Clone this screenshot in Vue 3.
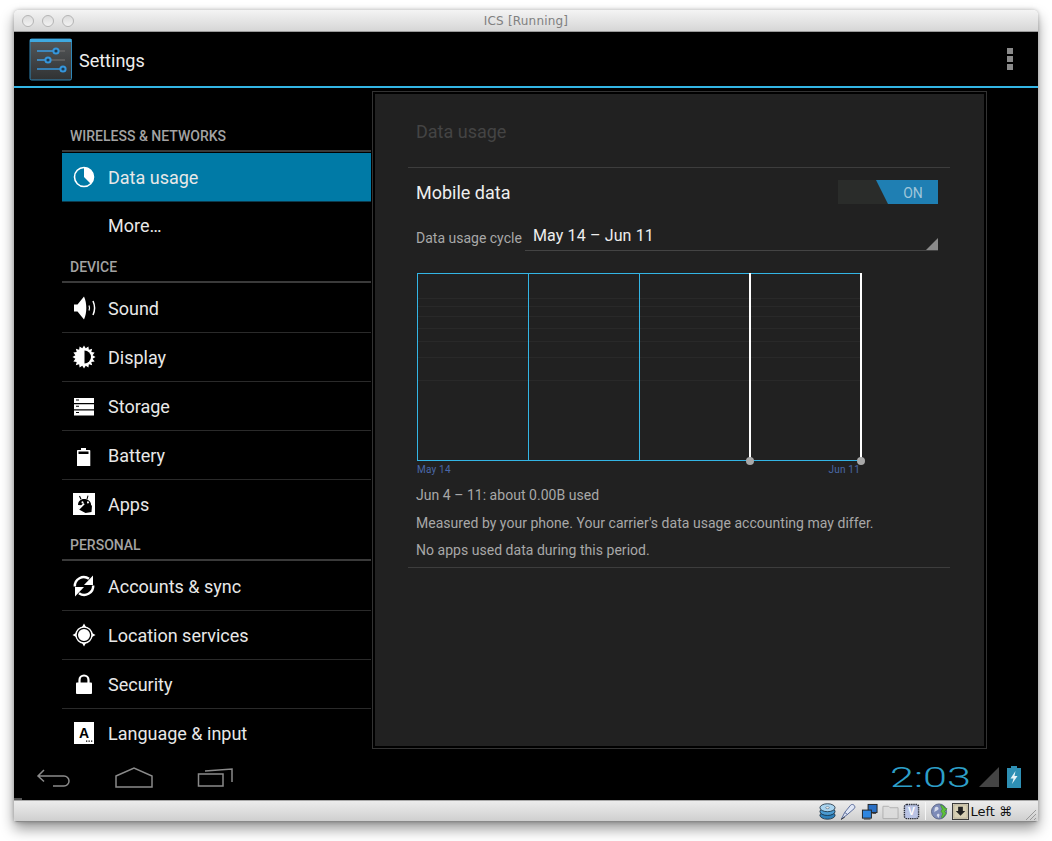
<template>
  <div class="page">
    <div class="window">
      <div class="titlebar">
        <div class="lights">
          <span class="light"></span>
          <span class="light"></span>
          <span class="light"></span>
        </div>
        <span class="window-title">ICS [Running]</span>
      </div>

      <div class="screen">
        <div class="actionbar">
          <svg class="app-icon" width="44" height="43" viewBox="0 0 44 43">
            <defs>
              <linearGradient id="appbg" x1="0" y1="0" x2="0" y2="1">
                <stop offset="0" stop-color="#55585a" />
                <stop offset="1" stop-color="#303233" />
              </linearGradient>
            </defs>
            <rect x="1" y="1" width="41.5" height="41" rx="1.5" fill="url(#appbg)" stroke="#2f87b8" />
            <rect x="1" y="1" width="41.5" height="3" fill="#3fa9e0" />
            <g stroke="#3596dc" stroke-width="1.5" fill="none">
              <path d="M8 13H36" stroke="#666" />
              <path d="M8 13H26" />
              <circle cx="27" cy="13" r="2.6" fill="#1c3a52" stroke-width="2" />
              <path d="M8 22H36" stroke="#666" />
              <path d="M8 22H19" />
              <circle cx="19" cy="22" r="2.6" fill="#1c3a52" stroke-width="2" />
              <path d="M8 31H36" />
              <circle cx="34" cy="31" r="2.6" fill="#1c3a52" stroke-width="2" />
            </g>
          </svg>
          <span class="app-title">Settings</span>
          <div class="overflow">
            <span></span>
            <span></span>
            <span></span>
          </div>
        </div>

        <div class="content">
          <div class="sidebar">
            <template v-for="section in sections" :key="section.title">
              <div class="section-title">{{ section.title }}</div>
              <div
                v-for="(item, index) in section.items"
                :key="item.label"
                class="row"
                :class="{ selected: item.selected, plain: item.plain, first: index == 0, 'no-icon': !item.icon }"
              >
                <svg class="row-icon" width="24" height="24" viewBox="0 0 24 24">
                  <template v-if="item.icon">
                    <path
                      v-for="(p, i) in icons[item.icon]"
                      :key="i"
                      :d="p.d"
                      :fill="p.stroke ? 'none' : (p.fill || '#fff')"
                      fill-rule="evenodd"
                      :stroke="p.stroke ? '#fff' : 'none'"
                      :stroke-width="p.stroke"
                    />
                    <text v-if="item.icon == 'language'" x="12" y="17" class="key-a">A</text>
                  </template>
                </svg>
                <span class="row-label">{{ item.label }}</span>
              </div>
            </template>
          </div>

          <div class="panel">
            <div class="panel-inner">
              <div class="panel-title">Data usage</div>

              <div class="mobile-row">
                <span class="mobile-label">Mobile data</span>
                <div class="toggle">
                  <span class="toggle-on">ON</span>
                </div>
              </div>

              <div class="cycle-row">
                <span class="cycle-label">Data usage cycle</span>
                <div class="spinner">
                  <span>May 14 – Jun 11</span>
                  <i class="spinner-corner"></i>
                </div>
              </div>

              <svg class="chart" width="460" height="206" viewBox="0 0 460 206">
                <path
                  v-for="y in gridLines"
                  :key="y"
                  :d="`M2 ${y}.5H445`"
                  stroke="#292929"
                  fill="none"
                />
                <rect x="1.5" y="1.5" width="443" height="187" fill="none" stroke="#33b5e5" />
                <path d="M112.5 2V188M223.5 2V188" stroke="#33b5e5" fill="none" />
                <path d="M334 1V189M445 1V189" stroke="#fff" stroke-width="2" fill="none" />
                <circle cx="334" cy="189" r="4" fill="#a8a8a8" />
                <circle cx="445" cy="189" r="4" fill="#a8a8a8" />
                <text x="1" y="201" class="chart-label">May 14</text>
                <text x="444" y="201" text-anchor="end" class="chart-label">Jun 11</text>
              </svg>

              <div class="notes">
                <p>Jun 4 – 11: about 0.00B used</p>
                <p>Measured by your phone. Your carrier's data usage accounting may differ.</p>
                <p>No apps used data during this period.</p>
              </div>
            </div>
          </div>
        </div>

        <div class="navbar">
          <div class="nav-buttons">
            <svg width="36" height="22" viewBox="0 0 36 22">
              <path d="M8 4L2 10l6 5.5M2 10H28a5 5 0 0 1 0 10H17" />
            </svg>
            <svg width="38" height="21" viewBox="0 0 38 21">
              <path d="M1 9L19 1l18 8V20H1z" />
            </svg>
            <svg width="37" height="20" viewBox="0 0 37 20">
              <path d="M2.500 7H27V19H2.500zM9 4L36 2V15" />
            </svg>
          </div>

          <div class="status">
            <span class="clock"><span>2:03</span></span>
            <svg width="20" height="20" viewBox="0 0 20 20">
              <path d="M20 0V20H0z" fill="#444" />
            </svg>
            <svg width="14" height="22" viewBox="0 0 14 22">
              <path d="M4 0H10V2H14V22H0V2H4z" fill="#2e8fb4" />
              <path d="M8.500 5L3.500 12.500H6.500L5 18 10.500 10H7.500z" fill="#e6f2f7" />
            </svg>
          </div>
        </div>
      </div>

      <div class="vbox-bar">
        <svg width="17" height="17" viewBox="0 0 18 18">
          <ellipse cx="9" cy="13" rx="8" ry="4.200" fill="#2e7fb8" stroke="#123" stroke-width=".8" />
          <ellipse cx="9" cy="9" rx="8" ry="4.200" fill="#4b9bd1" stroke="#123" stroke-width=".8" />
          <ellipse cx="9" cy="5" rx="8" ry="4.200" fill="#a9d4ef" stroke="#123" stroke-width=".8" />
          <ellipse cx="9" cy="5" rx="2" ry="1" fill="#fff" stroke="#345" stroke-width=".5" />
        </svg>
        <svg width="17" height="17" viewBox="0 0 18 18">
          <path d="M1.500 17L5 10 11 2.500c1.200-1.400 3-1.200 4 0s1 2.500 0 3.500L8 12z" fill="#dfe6f5" stroke="#46598c" stroke-width=".9" />
          <path d="M5 10l3 2.200" stroke="#46598c" stroke-width=".9" fill="none" />
          <path d="M1 17.500L5 15" stroke="#333" fill="none" />
        </svg>
        <svg width="17" height="17" viewBox="0 0 18 18">
          <rect x="7.500" y="1.500" width="9.500" height="8.500" fill="#2a6fc4" stroke="#222" />
          <rect x="1.500" y="7.500" width="9.500" height="8.500" fill="#2f86e0" stroke="#222" />
          <path d="M3 17H10M12 11H16" stroke="#333" fill="none" />
        </svg>
        <svg class="faded" width="17" height="17" viewBox="0 0 18 18">
          <path d="M1 3.500H7l1.500 1.500h8.500v11.500H1z" fill="#dcdcdc" stroke="#a8a8a8" />
        </svg>
        <svg width="17" height="17" viewBox="0 0 18 18">
          <rect x="1.500" y="1.500" width="15" height="15" rx="2.500" fill="#b9c3e4" stroke="#2b2f3a" stroke-width="1.500" stroke-dasharray="1.500 .8" />
          <text x="9" y="13" class="chip-v">V</text>
        </svg>
        <span class="bar-sep"></span>
        <svg width="17" height="17" viewBox="0 0 18 18">
          <circle cx="8.500" cy="9" r="8" fill="#7d8bb8" stroke="#4a5578" stroke-width=".8" />
          <path d="M4 5c2-2 4-1 4 1S4 8 3.500 10zM6 13c1-2 3-2 3 0l-1 3z" fill="#d7dcec" />
          <path d="M10 2c3 .5 4 2 4 3l3 1-2.500 3 1.500 2-4 5-1-1 1.500-4-2-2 1.500-2.500z" fill="#5fc23a" stroke="#2c7d18" stroke-width=".5" />
        </svg>
        <svg class="host-box" width="17" height="17" viewBox="0 0 18 18">
          <rect x=".5" y=".5" width="17" height="17" fill="#e8e0c8" stroke="#333" />
          <rect x="2" y="2" width="14" height="14" fill="#d8d0b4" stroke="#8a8470" stroke-width=".5" />
          <path d="M6.500 4H11.500V8.500H14L9 13.500 4 8.500H6.500z" fill="#222" />
        </svg>
        <span class="host-key">Left ⌘</span>
        <svg class="grip" width="12" height="12" viewBox="0 0 12 12">
          <path d="M1 11L11 1M5 11L11 5M9 11L11 9" stroke="#9a9a9a" fill="none" />
        </svg>
      </div>
    </div>
  </div>
</template>

<script setup>
const gridLines = [26, 34, 44, 56, 69, 85, 108]

// little star for the display icon, half of it gets covered again
const spikes = () => {
  let d = ''
  for (let i = 0; i < 32; i++) {
    const r = i % 2 ? 8.8 : 11.5
    const a = (i * Math.PI) / 16
    d += (i ? 'L' : 'M') + (12 + r * Math.sin(a)).toFixed(2) + ' ' + (12 - r * Math.cos(a)).toFixed(2)
  }
  return d + 'z'
}

const icons = {
  usage: [
    { d: 'M12 2.500a9.500 9.500 0 1 0 0 19a9.500 9.500 0 1 0 0-19z', stroke: 1.6 },
    { d: 'M12 2.500a9.500 9.500 0 0 1 6.700 16.200L12 12z' }
  ],
  sound: [
    { d: 'M2 8.500h3.500L12 .5c1.600 3.500 2.300 7.500 2.300 11.500s-.7 8-2.300 11.500L5.500 15.500H2z' },
    { d: 'M17 9.500c.7 1.600.7 3.400 0 5', stroke: 1.2 },
    { d: 'M21 5c2 4.400 2 9.600 0 14', stroke: 1.5 }
  ],
  display: [
    { d: spikes() },
    { d: 'M12.500 5.500a6.500 6.500 0 0 1 0 13z', fill: '#000' }
  ],
  storage: [
    { d: 'M2 4h20v5H2zM4 5.500v1h3v-1zM2 10.200h20v5H2zM4 11.700v1h3v-1zM2 16.400h20v5H2zM4 17.900v1h3v-1z' }
  ],
  battery: [
    { d: 'M9 5h5v2h3.500c.5 0 .8.3.8.8V23H5V7.800c0-.5.3-.8.800-.8H9zM6.500 8.500V11h10V8.500z' }
  ],
  apps: [
    { d: 'M1 1h22v22H1z' },
    { d: 'M6 13c0-4 3-6.500 7-6s6.500 3 6 7z', fill: '#000' },
    { d: 'M6 17l6-5 8 1.500-.5 6.500-6 1z', fill: '#000' },
    { d: 'M2.500 20L11.500 11l1.200 1.200-9 9z' },
    { d: 'M8 3.800L9.500 7l-1 .5L7 4.300zM15.500 3.500L14.500 7l1 .3 1-3.500z', fill: '#000' },
    { d: 'M9.500 10.500a1 1 0 1 0 0-.1zM15 10.500a1 1 0 1 0 0-.1z' }
  ],
  accounts: [
    { d: 'M2.800 12.500A9 9 0 0 1 17 4.800', stroke: 2.500 },
    { d: 'M21 1.500v9.500h-9z' },
    { d: 'M21.200 11.500A9 9 0 0 1 7 19.200', stroke: 2.500 },
    { d: 'M3 22.500V13h9z' }
  ],
  location: [
    { d: 'M12 4a8 8 0 1 0 0 16a8 8 0 1 0 0-16z', stroke: 1.400 },
    { d: 'M12 6a6 6 0 1 0 0 12a6 6 0 1 0 0-12zM12 .5l2 3.500h-4zM12 23.500l-2-3.500h4zM.5 12l3.500-2v4zM23.500 12l-3.500 2v-4z' }
  ],
  security: [
    { d: 'M7.500 11V8a4.500 4.500 0 0 1 9 0v3', stroke: 2.200 },
    { d: 'M5 10.500h14c.5 0 1 .5 1 1V21c0 .5-.5 1-1 1H5c-.5 0-1-.5-1-1v-9.500c0-.5.5-1 1-1z' }
  ],
  language: [
    { d: 'M2 1h20v22H2zM14 19.500v1.300h1.300v-1.300zM16.500 19.500v1.300h1.300v-1.300zM19 19.500v1.300h1.300v-1.300z' }
  ]
}

const sections = [
  {
    title: 'WIRELESS & NETWORKS',
    items: [
      { label: 'Data usage', icon: 'usage', selected: true },
      { label: 'More…', plain: true }
    ]
  },
  {
    title: 'DEVICE',
    items: [
      { label: 'Sound', icon: 'sound' },
      { label: 'Display', icon: 'display' },
      { label: 'Storage', icon: 'storage' },
      { label: 'Battery', icon: 'battery' },
      { label: 'Apps', icon: 'apps', plain: true }
    ]
  },
  {
    title: 'PERSONAL',
    items: [
      { label: 'Accounts & sync', icon: 'accounts' },
      { label: 'Location services', icon: 'location' },
      { label: 'Security', icon: 'security' },
      { label: 'Language & input', icon: 'language' }
    ]
  }
]
</script>

<style>
html, body {
  background: #fff;
}
</style>

<style scoped>
.page {
  height: 841px;
  box-sizing: border-box;
  padding: 10px 0 0 14px;
  overflow: hidden;
}

.window {
  width: 1024px;
  height: 812px;
  border-radius: 5px 5px 3px 3px;
  box-shadow: 0 7px 14px rgba(0, 0, 0, 0.4), 0 0 4px rgba(0, 0, 0, 0.25);
  display: flex;
  flex-direction: column;
  overflow: hidden;
  font-family: Roboto, "Liberation Sans", sans-serif;
}

.titlebar {
  height: 22px;
  flex: none;
  box-sizing: border-box;
  background: linear-gradient(#f4f4f4, #d6d6d6);
  border-bottom: 1px solid #9a9a9a;
  padding-top: 1px;
  display: flex;
  align-items: center;
  justify-content: center;
  position: relative;
}

.lights {
  position: absolute;
  left: 8px;
  top: 5px;
  display: flex;
  gap: 8px;
}

.light {
  width: 12px;
  height: 12px;
  box-sizing: border-box;
  border: 1px solid #b4b4b4;
  border-radius: 50%;
  background: linear-gradient(#dcdcdc, #f2f2f2);
}

.window-title {
  font-family: "DejaVu Sans", sans-serif;
  font-size: 12px;
  letter-spacing: 0.2px;
  color: #808080;
}

.screen {
  height: 768px;
  flex: none;
  background: #000;
  display: flex;
  flex-direction: column;
}

.actionbar {
  height: 56px;
  flex: none;
  box-sizing: border-box;
  border-bottom: 2px solid #33b5e5;
  display: flex;
  align-items: center;
  padding: 0 25px 0 15px;
}

.app-icon {
  margin-top: 1px;
}

.app-title {
  margin: 2px 0 0 6px;
  font-size: 18px;
  color: #eee;
}

.overflow {
  margin-left: auto;
  display: flex;
  flex-direction: column;
  gap: 2px;
}

.overflow span {
  width: 6px;
  height: 6px;
  background: #8a8a8a;
}

.content {
  height: 662px;
  flex: none;
  display: flex;
  padding-left: 48px;
  overflow: hidden;
}

.sidebar {
  width: 309px;
  flex: none;
  padding-top: 31px;
  box-sizing: border-box;
}

.section-title {
  height: 33px;
  box-sizing: border-box;
  border-bottom: 2px solid #3a3a3a;
  padding-left: 8px;
  font-size: 14px;
  font-weight: 500;
  line-height: 35px;
  color: #a3a3a3;
}

.row {
  height: 49px;
  box-sizing: border-box;
  border-bottom: 1px solid #2a2a2a;
  padding-left: 10px;
  display: flex;
  align-items: center;
  gap: 12px;
  font-size: 18px;
  color: #e8e8e8;
}

.row.first {
  margin-top: 1px;
}

.row.plain {
  height: 48px;
  border-bottom: none;
}

.row.no-icon {
  padding-bottom: 2px;
}

.row.selected {
  background: #007aa6;
  border-bottom-color: #0c3a4d;
}

.row-icon {
  flex: none;
}

.key-a {
  font-family: "Liberation Sans", sans-serif;
  font-size: 14px;
  font-weight: 700;
  text-anchor: middle;
  fill: #000;
}

.panel {
  margin: 3px 0 0 1px;
  width: 615px;
  height: 658px;
  box-sizing: border-box;
  border: 1px solid #333;
  padding: 2px;
  flex: none;
}

.panel-inner {
  height: 100%;
  box-sizing: border-box;
  background: #212121;
  padding: 0 34px 0 33px;
}

.panel-title {
  padding: 26px 8px 23px;
  line-height: 24px;
  font-size: 18px;
  color: #444;
  border-bottom: 1px solid #3d3d3d;
}

.mobile-row {
  height: 24px;
  margin-top: 12px;
  padding: 0 12px 0 8px;
  display: flex;
  align-items: center;
  justify-content: space-between;
}

.mobile-label {
  font-size: 18px;
  color: #eee;
}

.toggle {
  width: 100px;
  height: 24px;
  background: #2a2c2a;
  position: relative;
}

.toggle-on {
  position: absolute;
  top: 0;
  right: 0;
  width: 62px;
  height: 24px;
  padding-left: 12px;
  box-sizing: border-box;
  clip-path: polygon(0 0, 100% 0, 100% 100%, 12px 100%);
  background: #1f7fb3;
  text-align: center;
  font-size: 14px;
  line-height: 26px;
  color: #9fc6da;
}

.cycle-row {
  margin-top: 20px;
  padding: 0 12px 0 8px;
  display: flex;
  align-items: flex-end;
}

.cycle-label {
  width: 109px;
  flex: none;
  font-size: 14px;
  line-height: 18px;
  padding-bottom: 4px;
  color: #a8a8a8;
}

.spinner {
  flex: 1;
  height: 27px;
  box-sizing: border-box;
  border-bottom: 1px solid #444;
  padding-left: 8px;
  position: relative;
  font-size: 16px;
  letter-spacing: 0.13px;
  line-height: 24px;
  color: #eee;
}

.spinner-corner {
  position: absolute;
  right: 0;
  bottom: 0;
  width: 12px;
  height: 12px;
  background: #8a8a8a;
  clip-path: polygon(100% 0, 100% 100%, 0 100%);
}

.chart {
  display: block;
  margin: 21px 0 0 8px;
}

.chart-label {
  font-family: Roboto, sans-serif;
  font-size: 10px;
  letter-spacing: 0.2px;
  fill: #4a68a8;
}

.notes {
  margin-top: 4px;
  padding: 0 8px 2px;
  border-bottom: 1px solid #3d3d3d;
}

.notes p {
  margin: 0;
  font-size: 14px;
  letter-spacing: 0.03px;
  line-height: 27.5px;
  color: #a8a8a8;
}

.navbar {
  flex: 1;
  padding: 4px 17px 0 22px;
  display: flex;
  align-items: center;
  justify-content: space-between;
  position: relative;
}

.navbar::after {
  content: "";
  position: absolute;
  left: 0;
  bottom: 0;
  width: 8px;
  height: 2px;
  background: #555;
}

.nav-buttons {
  display: flex;
  align-items: center;
  gap: 43px;
}

.nav-buttons svg {
  fill: none;
  stroke: #8a8a8a;
  stroke-width: 1.5;
}

.status {
  display: flex;
  align-items: center;
}

.clock {
  width: 80px;
  margin: 2px 9px 0 0;
  font-size: 27px;
  font-weight: 300;
  line-height: 26px;
  color: #2d9fc8;
}

.clock span {
  display: inline-block;
  transform: scaleX(1.6);
  transform-origin: left center;
}

.status svg + svg {
  margin-left: 8px;
}

.vbox-bar {
  flex: 1;
  box-sizing: border-box;
  background: linear-gradient(#ececec, #cfcfcf);
  border-top: 1px solid #a8a8a8;
  border-bottom: 1px solid #8a8a8a;
  display: flex;
  align-items: center;
  justify-content: flex-end;
  gap: 4px;
  padding-right: 26px;
  position: relative;
}

.faded {
  opacity: 0.85;
}

.chip-v {
  font-family: "Liberation Sans", sans-serif;
  font-size: 11px;
  font-weight: 700;
  text-anchor: middle;
  fill: #fff;
}

.bar-sep {
  width: 1px;
  height: 18px;
  margin: 0 1px;
  background: #f6f6f6;
}

.host-box {
  margin-right: -3px;
}

.host-key {
  font-family: "DejaVu Sans", sans-serif;
  font-size: 13px;
  color: #111;
  white-space: nowrap;
}

.grip {
  position: absolute;
  right: 1px;
  bottom: 0;
}
</style>
